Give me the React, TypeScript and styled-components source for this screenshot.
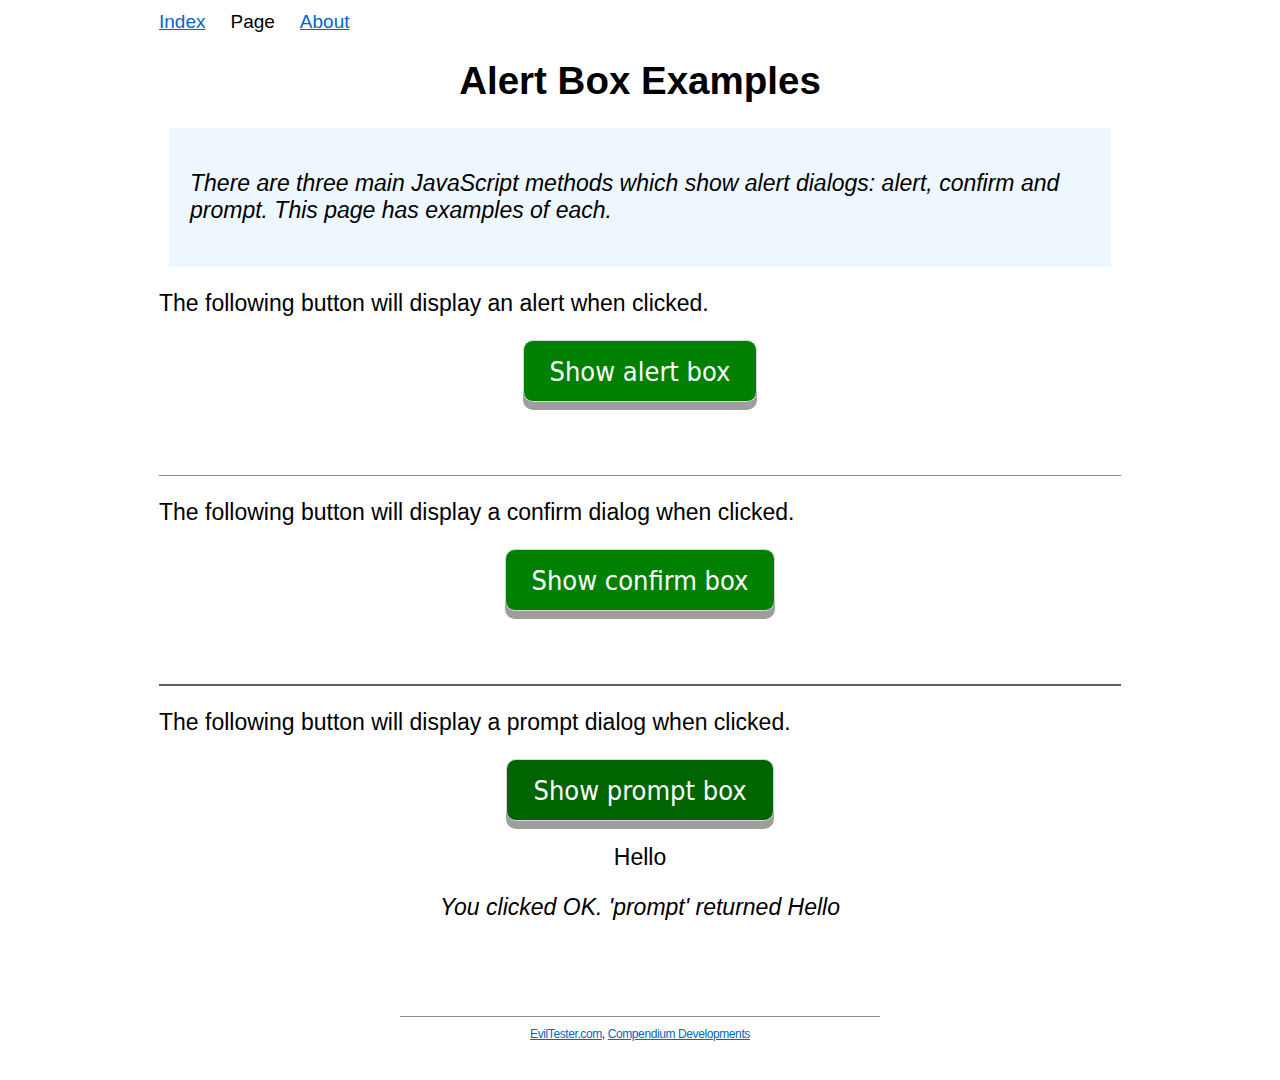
import styled, { createGlobalStyle } from "styled-components";

const GlobalStyle = createGlobalStyle`
  body {
    margin: 0;
    background: #fff;
    color: #000;
    font-family: "Liberation Sans", Arial, sans-serif;
  }
`;

function App() {
  return (
    <Page>
      <GlobalStyle />
      <Nav>
        <NavLink href="#">Index</NavLink>
        <NavCurrent>Page</NavCurrent>
        <NavLink href="#">About</NavLink>
      </Nav>
      <Title>Alert Box Examples</Title>
      <Intro>
        <p>
          There are three main JavaScript methods which show alert dialogs:
          alert, confirm and prompt. This page has examples of each.
        </p>
      </Intro>

      <Section>
        <Text>The following button will display an alert when clicked.</Text>
        <Centered>
          <AlertButton>Show alert box</AlertButton>
        </Centered>
      </Section>
      <Rule />

      <Section>
        <Text>The following button will display a confirm dialog when clicked.</Text>
        <Centered>
          <AlertButton>Show confirm box</AlertButton>
        </Centered>
      </Section>
      <Rule $dark />

      <Section $last>
        <Text>The following button will display a prompt dialog when clicked.</Text>
        <Centered>
          <AlertButton $dark>Show prompt box</AlertButton>
        </Centered>
        <Result>Hello</Result>
        <Result $italic>You clicked OK. 'prompt' returned Hello</Result>
      </Section>

      <Footer>
        <FooterLink href="#">EvilTester.com</FooterLink>,{" "}
        <FooterLink href="#">Compendium Developments</FooterLink>
      </Footer>
    </Page>
  );
}

const Page = styled.div`
  width: 962px;
  margin: 0 auto;
`;

const Nav = styled.nav`
  display: flex;
  gap: 25px;
  padding-top: 11px;
  font-size: 19px;
  line-height: 22px;
`;

const NavLink = styled.a`
  color: #0066cc;
  text-decoration: underline;
`;

const NavCurrent = styled.span`
  color: #000;
`;

const Title = styled.h1`
  margin: 26px 0 0;
  text-align: center;
  font-size: 38.5px;
  line-height: 44px;
  font-weight: bold;
`;

const Intro = styled.div`
  margin: 25px 10px 0;
  background: #eef6fe;
  padding: 42px 21px 42px;
  height: 139px;
  box-sizing: border-box;

  p {
    margin: 0;
    font-style: italic;
    font-size: 23px;
    line-height: 27px;
  }
`;

const Section = styled.section<{ $last?: boolean }>`
  padding-top: 23px;
  padding-bottom: ${(p) => (p.$last ? "52px" : "73px")};
`;

const Text = styled.p`
  margin: 0;
  font-size: 23px;
  line-height: 26px;
`;

const Centered = styled.div`
  display: flex;
  justify-content: center;
  margin-top: 24px;
`;

const AlertButton = styled.button<{ $dark?: boolean }>`
  font-family: "DejaVu Sans Condensed", "DejaVu Sans", sans-serif;
  font-stretch: condensed;
  font-size: 27px;
  color: #fff;
  background: ${(p) => (p.$dark ? "#006400" : "#008000")};
  border: 1px solid #d4d4d4;
  border-radius: 10px;
  padding: 0 26px;
  height: 62px;
  box-shadow: 0 8px 0 #9e9e9e;
  cursor: pointer;
`;

const Rule = styled.hr<{ $dark?: boolean }>`
  margin: 0;
  border: none;
  height: ${(p) => (p.$dark ? "2px" : "1px")};
  background: ${(p) => (p.$dark ? "#606060" : "#8a8a8a")};
`;

const Result = styled.p<{ $italic?: boolean }>`
  margin: ${(p) => (p.$italic ? "24px 0 0" : "23px 0 0")};
  text-align: center;
  font-size: 23px;
  line-height: 26px;
  font-style: ${(p) => (p.$italic ? "italic" : "normal")};
`;

const Footer = styled.footer`
  width: 480px;
  margin: 44px auto 0;
  border-top: 1px solid #8a8a8a;
  padding-top: 10px;
  text-align: center;
  font-size: 12px;
  letter-spacing: -0.4px;
  color: #000;
`;

const FooterLink = styled.a`
  color: #0066cc;
  text-decoration: underline;
`;

export default App;
